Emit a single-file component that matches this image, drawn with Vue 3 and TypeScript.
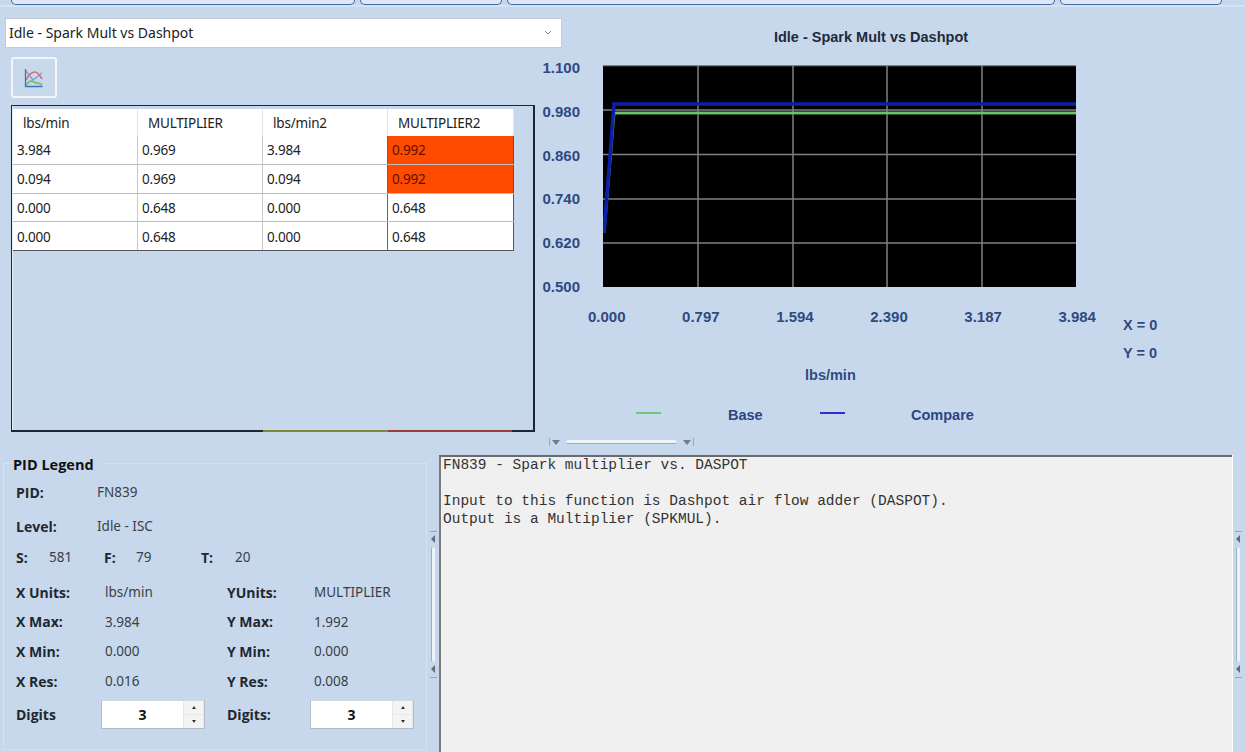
<template>
  <div class="screen">
    <div class="tabs">
      <div v-for="tab in tabs" :key="tab" class="tab" :class="tab"></div>
    </div>

    <div class="upper">
      <div class="left-col">
        <div class="select">
          <span>Idle - Spark Mult vs Dashpot</span>
          <svg class="chevron" width="8" height="5" viewBox="0 0 8 5">
            <path d="M1 1l3 3 3-3" fill="none" stroke="#8a8a8a" stroke-width="1" />
          </svg>
        </div>

        <button class="icon-btn" type="button">
          <svg width="20" height="20" viewBox="0 0 20 20" fill="none">
            <path d="M2 3l7 9 9-7" stroke="#7f9fd4" stroke-width="1.300" />
            <path d="M2 12C5 6 8 4 11 4s5 4 7 7" stroke="#dc6f7c" stroke-width="1.700" />
            <path d="M2 17c3-4 6-5 8-3s5 0 8 3" stroke="#7fbe7d" stroke-width="2" />
            <path d="M1.500 1v17.500h17" stroke="#3b74c4" stroke-width="1.300" />
          </svg>
        </button>

        <div class="frame">
          <div class="grid-table">
            <div class="row head">
              <div v-for="h in headers" :key="h" class="cell">{{ h }}</div>
            </div>
            <div v-for="(r, i) in rows" :key="i" class="row">
              <div
                v-for="(c, j) in r"
                :key="j"
                class="cell"
                :class="{ hot: j === 3 && i < 2 }"
              >
                {{ c }}
              </div>
            </div>
          </div>
          <div class="edge-bits">
            <span class="olive"></span>
            <span class="red"></span>
          </div>
        </div>
      </div>

      <div class="chart">
        <div class="chart-title">Idle - Spark Mult vs Dashpot</div>

        <div class="plot-row">
          <div class="y-ticks">
            <span v-for="t in yTicks" :key="t">{{ t }}</span>
          </div>
          <svg class="plot" width="473" height="222" viewBox="0 0 473 222">
            <rect width="473" height="222" fill="#000" />
            <path
              d="M95 0v222M190 0v222M284 0v222M379 0v222M0 45h473M0 89.500h473M0 134h473M0 178h473M0 .500h473"
              stroke="#808080"
              stroke-width="1.500"
            />
            <path d="M1 168L11 48H473" fill="none" stroke="#4caf50" stroke-width="3" />
            <path d="M11 48H473" fill="none" stroke="#8fd08f" stroke-width="1" />
            <path d="M1 168L11 39H473" fill="none" stroke="#0d1fa8" stroke-width="3.500" />
          </svg>
        </div>

        <div class="chart-lower">
          <div class="axis-block">
            <div class="x-ticks">
              <span v-for="t in xTicks" :key="t">{{ t }}</span>
            </div>
            <div class="x-unit">lbs/min</div>
            <div class="series">
              <span class="swatch base"></span>
              <span class="series-name base-name">Base</span>
              <span class="swatch compare"></span>
              <span class="series-name compare-name">Compare</span>
            </div>
            <div class="h-split">
              <span class="tri-down"></span>
              <span class="h-bar"></span>
              <span class="tri-down"></span>
            </div>
          </div>
          <div class="readout">
            <div>X = 0</div>
            <div>Y = 0</div>
          </div>
        </div>
      </div>
    </div>

    <div class="lower">
      <fieldset class="legend-box">
        <legend>PID Legend</legend>
        <div class="lg-row pid"><b>PID:</b><span>FN839</span></div>
        <div class="lg-row level"><b>Level:</b><span>Idle - ISC</span></div>
        <div class="lg-row sft">
          <b class="s">S:</b><span class="sv">581</span>
          <b class="f">F:</b><span class="fv">79</span>
          <b class="t">T:</b><span>20</span>
        </div>
        <div class="units">
          <div v-for="u in units" :key="u.a" class="lg-row unit">
            <b>{{ u.a }}</b><span>{{ u.av }}</span>
            <b>{{ u.b }}</b><span>{{ u.bv }}</span>
          </div>
        </div>
        <div class="digits">
          <b class="d1">Digits</b>
          <div class="spin">
            <span class="spin-val">3</span>
            <span class="spin-btns"><i class="up"></i><i class="down"></i></span>
          </div>
          <b class="d2">Digits:</b>
          <div class="spin">
            <span class="spin-val">3</span>
            <span class="spin-btns"><i class="up"></i><i class="down"></i></span>
          </div>
        </div>
      </fieldset>

      <div class="v-split">
        <span class="dash"></span><span class="tri-left"></span><span class="v-bar"></span><span class="tri-left"></span><span class="dash"></span>
      </div>

      <pre class="desc">FN839 - Spark multiplier vs. DASPOT

Input to this function is Dashpot air flow adder (DASPOT).
Output is a Multiplier (SPKMUL).</pre>

      <div class="v-split">
        <span class="dash"></span><span class="tri-left"></span><span class="v-bar"></span><span class="tri-left"></span><span class="dash"></span>
      </div>
    </div>
  </div>
</template>

<script setup lang="ts">
const tabs = ['t1', 't2', 't3', 't4'];
const headers = ['lbs/min', 'MULTIPLIER', 'lbs/min2', 'MULTIPLIER2'];
const rows: string[][] = [
  ['3.984', '0.969', '3.984', '0.992'],
  ['0.094', '0.969', '0.094', '0.992'],
  ['0.000', '0.648', '0.000', '0.648'],
  ['0.000', '0.648', '0.000', '0.648'],
];
const yTicks = ['1.100', '0.980', '0.860', '0.740', '0.620', '0.500'];
const xTicks = ['0.000', '0.797', '1.594', '2.390', '3.187', '3.984'];
const units = [
  { a: 'X Units:', av: 'lbs/min', b: 'YUnits:', bv: 'MULTIPLIER' },
  { a: 'X Max:', av: '3.984', b: 'Y Max:', bv: '1.992' },
  { a: 'X Min:', av: '0.000', b: 'Y Min:', bv: '0.000' },
  { a: 'X Res:', av: '0.016', b: 'Y Res:', bv: '0.008' },
];
</script>

<style>
html,
body {
  margin: 0;
  background: #c7d8ec;
}
</style>

<style scoped>
.screen {
  width: 1245px;
  height: 752px;
  overflow: hidden;
  background: #c7d8ec;
  font-family: 'Noto Sans', 'Open Sans', sans-serif;
  color: #222;
  display: flex;
  flex-direction: column;
}

.tabs {
  height: 7px;
  flex: none;
  display: flex;
  gap: 5px;
  padding-left: 11px;
  background: linear-gradient(#c7d8ec 5px, #d5e2f1 5px);
  box-sizing: border-box;
}
.tab {
  height: 5px;
  box-sizing: border-box;
  background: #dce8f5;
  border: 1px solid #3f6aa5;
  border-top: none;
  border-radius: 0 0 5px 5px;
}
.t1 { width: 344px; }
.t2 { width: 142px; }
.t3 { width: 548px; }
.t4 { width: 162px; }

.upper {
  height: 443px;
  flex: none;
  display: flex;
}

.left-col {
  width: 557px;
  margin-left: 5px;
  flex: none;
}
.select {
  height: 30px;
  margin-top: 11px;
  box-sizing: border-box;
  background: #fff;
  border: 1px solid #c2ccd8;
  padding: 0 9px 2px 3px;
  display: flex;
  align-items: center;
  justify-content: space-between;
  font-size: 14px;
}
.chevron {
  flex: none;
}
.icon-btn {
  display: flex;
  align-items: center;
  justify-content: center;
  width: 46px;
  height: 41px;
  margin: 9px 0 0 6px;
  padding: 0;
  box-sizing: border-box;
  background: #c9d9ec;
  border: 2px solid #f2f6fb;
  border-radius: 3px;
}

.frame {
  position: relative;
  width: 524px;
  height: 327px;
  margin: 7px 0 0 6px;
  box-sizing: border-box;
  border: 1px solid #1d2733;
  border-bottom-width: 2px;
  border-right-width: 2px;
  padding: 3px 0 0 1px;
  box-shadow: inset 1px 0 0 #e6eef7;
}
.grid-table {
  width: 501px;
  font-size: 13.500px;
  letter-spacing: -0.2px;
  color: #222;
}
.row {
  display: grid;
  grid-template-columns: 125px 125px 125px 126px;
  height: 28.750px;
  background: #fff;
  border-bottom: 1px solid #bdbdbd;
  box-sizing: border-box;
}
.row:last-child {
  border-bottom-color: #555;
}
.head {
  height: 27px;
  border-bottom: none;
}
.cell {
  display: flex;
  align-items: center;
  padding: 1px 0 0 4px;
  border-right: 1px solid #c9c9c9;
  box-sizing: border-box;
}
.cell:nth-child(3) {
  border-right-color: #666;
}
.cell:last-child {
  border-right-color: #555;
}
.head .cell {
  padding: 0 0 0 10px;
  border-right-color: #e4e4e4;
}
.hot {
  background: #ff4b00;
  color: #5a1200;
}
.edge-bits {
  position: absolute;
  left: 251px;
  bottom: -2px;
  display: flex;
}
.edge-bits span {
  display: block;
  height: 2px;
}
.olive {
  width: 125px;
  background: #7c8a3c;
}
.red {
  width: 124px;
  background: #9c3b33;
}

.chart {
  width: 662px;
  margin-left: -22px;
  flex: none;
  position: relative;
}
.chart-title {
  margin-top: 21px;
  height: 18px;
  text-align: center;
  font: bold 14.500px/18px 'Liberation Sans', sans-serif;
  color: #1f2a3a;
}
.plot-row {
  display: flex;
  margin-top: 19px;
  font: bold 15px/18px 'Liberation Sans', sans-serif;
  color: #2f4a80;
}
.y-ticks {
  width: 40px;
  height: 237px;
  margin-top: -6px;
  display: flex;
  flex-direction: column;
  justify-content: space-between;
  align-items: flex-end;
  flex: none;
}
.plot {
  display: block;
  margin-left: 23px;
  flex: none;
}

.chart-lower {
  display: flex;
  font: bold 14.500px/18px 'Liberation Sans', sans-serif;
  color: #2f4a80;
}
.axis-block {
  width: 583px;
  flex: none;
}
.x-ticks {
  display: flex;
  justify-content: space-between;
  margin: 12px 0 0 48px;
  width: 508px;
  font-size: 15px;
}
.x-unit {
  margin: 40px 0 0 265px;
}
.series {
  display: flex;
  align-items: center;
  margin: 22px 0 0 96px;
  height: 18px;
  color: #2a4583;
}
.swatch {
  width: 25px;
  height: 2px;
  flex: none;
  margin-top: -4px;
}
.swatch.base {
  background: #6cc978;
}
.swatch.compare {
  background: #2a33d0;
}
.base-name {
  margin-left: 67px;
  width: 92px;
}
.compare-name {
  margin-left: 66px;
}
.h-split {
  display: flex;
  align-items: center;
  gap: 4px;
  margin: 14px 0 0 9px;
  width: 145px;
  height: 8px;
  box-sizing: border-box;
  border-left: 1px solid #9aa8b8;
  border-right: 1px solid #9aa8b8;
}
.tri-down {
  width: 0;
  height: 0;
  border: 4px solid transparent;
  border-top: 5px solid #6f7d8e;
  border-bottom: none;
  margin: 0 2px;
}
.h-bar {
  flex: 1;
  height: 3px;
  background: #eef3f9;
  border-bottom: 1px solid #9fadbd;
  border-radius: 2px;
}
.readout {
  margin-top: 20px;
  display: flex;
  flex-direction: column;
  gap: 10px;
}

.lower {
  flex: 1;
  display: flex;
  min-height: 0;
  position: relative;
}
.legend-box {
  width: 424px;
  height: 298px;
  margin: 2px 0 0 3px;
  padding: 0 0 0 12px;
  box-sizing: border-box;
  border: 1px solid #d5e1ef;
  flex: none;
  font-size: 13.500px;
  color: #3a3f47;
}
.legend-box legend {
  padding: 4px 8px 0 0;
  margin-left: -3px;
  font: bold 14.500px/18px 'Open Sans', sans-serif;
  color: #111;
}
.legend-box b {
  font-weight: 700;
  color: #1f2730;
  font-family: 'Open Sans', sans-serif;
  font-size: 14px;
}
.lg-row {
  display: flex;
  align-items: center;
  height: 20px;
}
.pid {
  margin-top: 8px;
}
.pid b,
.level b {
  width: 81px;
}
.level {
  margin-top: 14px;
}
.sft {
  margin-top: 11px;
}
.sft b,
.sft span {
  flex: none;
}
.sft .s {
  width: 33px;
}
.sft .sv {
  width: 55px;
}
.sft .f {
  width: 32px;
}
.sft .fv {
  width: 65px;
}
.sft .t {
  width: 34px;
}
.units {
  display: flex;
  flex-direction: column;
  gap: 9.700px;
  margin-top: 15px;
}
.unit {
  display: grid;
  grid-template-columns: 89px 122px 87px 1fr;
}
.digits {
  display: flex;
  align-items: center;
  margin-top: 9px;
}
.digits b {
  flex: none;
}
.d1 {
  width: 85px;
}
.d2 {
  width: 83px;
  margin-left: 22px;
}
.spin {
  width: 104px;
  height: 29px;
  flex: none;
  display: flex;
  box-sizing: border-box;
  border: 1px solid #b4bcc6;
  border-top-color: #d0d7df;
  background: #e8e8e8;
}
.spin-val {
  width: 81px;
  background: #fff;
  text-align: center;
  font: bold 14px/27px 'Open Sans', sans-serif;
  color: #111;
}
.spin-btns {
  flex: 1;
  display: flex;
  flex-direction: column;
  gap: 1px;
  padding: 0 1px;
}
.spin-btns i {
  flex: 1;
  background: #f4f4f4;
  display: flex;
  align-items: center;
  justify-content: center;
}
.spin-btns i::after {
  content: '';
  border: 2.500px solid transparent;
}
.up::after {
  border-bottom: 3px solid #333 !important;
  border-top: none !important;
}
.down::after {
  border-top: 3px solid #333 !important;
  border-bottom: none !important;
}

.v-split {
  width: 12px;
  flex: none;
  display: flex;
  flex-direction: column;
  align-items: center;
  padding-top: 81px;
  box-sizing: border-box;
}
.dash {
  width: 7px;
  height: 1px;
  background: #98a7b8;
}
.tri-left {
  width: 0;
  height: 0;
  margin: 3px 0 4px;
  border: 4px solid transparent;
  border-right: 4px solid #5f6d7c;
  border-left: none;
}
.v-bar {
  width: 3px;
  height: 115px;
  background: #eef3f9;
  border-left: 1px solid #9fadbd;
  border-radius: 2px;
}

.desc {
  width: 793px;
  height: 297px;
  margin: 5px 0 0 0;
  padding: 1px 0 0 4px;
  box-sizing: border-box;
  flex: none;
  background: #f0f0f0;
  box-shadow: inset 0 2px 0 #6b6b6b, inset 2px 0 0 #7a7a7a, 1px 0 0 #fff;
  font: 14.500px/18px 'Liberation Mono', monospace;
  color: #333;
}
</style>
